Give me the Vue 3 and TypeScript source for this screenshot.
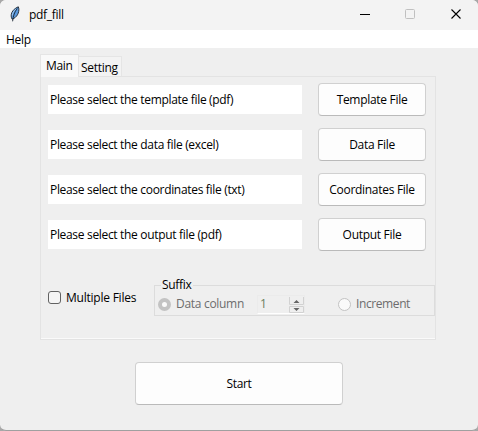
<script setup lang="ts">
import { ref } from 'vue'

interface FileRow {
  hint: string
  action: string
}

const rows: FileRow[] = [
  { hint: 'Please select the template file (pdf)', action: 'Template File' },
  { hint: 'Please select the data file (excel)', action: 'Data File' },
  { hint: 'Please select the coordinates file (txt)', action: 'Coordinates File' },
  { hint: 'Please select the output file (pdf)', action: 'Output File' },
]
const multiple = ref(false)
const column = ref(1)
</script>

<template>
  <div class="window">
    <header class="titlebar">
      <svg class="feather" width="12" height="16" viewBox="0 0 12 16">
        <path d="M3.2 13.2C.8 9.5 2.6 3.6 9.3.8c1.6 3.6-.3 9.400-4.500 11.600z" fill="#5b9be0" stroke="#26303c" stroke-width="1" />
        <path d="M8.300 2.500C5.500 6 4.300 9.500 3.600 15.300" fill="none" stroke="#172230" stroke-width=".9" />
        <path d="M7 2.800C4.700 4.700 3.500 7 3.300 9.500" fill="none" stroke="#b4d4f4" stroke-width=".8" />
      </svg>
      <span class="title">pdf_fill</span>
      <svg class="controls" width="116" height="30" viewBox="0 0 116 30" fill="none">
        <path d="M0 14.500h10" stroke="#000" />
        <rect x="45.500" y="9.500" width="9" height="9" rx="1" stroke="#c0c0c0" />
        <path d="M91.500 9.500l9 9M100.500 9.500l-9 9" stroke="#000" stroke-width="1.100" />
      </svg>
    </header>
    <nav class="menubar"><span class="help">Help</span></nav>
    <main class="body">
      <div class="tabs">
        <div class="tab active"><span>Main</span></div>
        <div class="tab"><span>Setting</span></div>
      </div>
      <section class="panel">
        <div v-for="row in rows" :key="row.action" class="row">
          <div class="entry">{{ row.hint }}</div>
          <button class="btn">{{ row.action }}</button>
        </div>
        <div class="options">
          <div class="check" @click="multiple = !multiple">
            <span class="box" :class="{ on: multiple }"></span>
            <span class="multi">Multiple Files</span>
          </div>
          <fieldset class="group">
            <legend>Suffix</legend>
            <div class="choices">
              <span class="radio on"></span>
              <span class="datacol">Data column</span>
              <div class="spin">
                <span class="value">{{ column }}</span>
                <svg width="15" height="17" viewBox="0 0 15 17">
                  <path d="M.5 0v7.500h14V0M.5 9.500h14v6h-14z" fill="none" stroke="#d2d2d2" />
                  <path d="M4.500 6L7.500 3l3 3zM4.500 11h6l-3 3z" fill="#666" />
                </svg>
              </div>
              <span class="radio"></span>
              <span class="incr">Increment</span>
            </div>
          </fieldset>
        </div>
      </section>
      <button class="btn start">Start</button>
    </main>
  </div>
</template>

<style>
body {
  margin: 0;
  background: #a8a8a8;
}
</style>

<style scoped>
.window {
  box-sizing: border-box;
  width: 478px;
  height: 431px;
  display: flex;
  flex-direction: column;
  overflow: hidden;
  border-bottom: 1px solid #a0a0a0;
  border-radius: 6px;
  background: #efefef;
  color: #000;
  font: 12px/16px 'Open Sans', 'Noto Sans', sans-serif;
  letter-spacing: -0.3px;
  white-space: nowrap;
}
.titlebar {
  height: 30px;
  flex: none;
  display: flex;
  align-items: center;
  padding-left: 9px;
  background: #f3f3f3;
}
.feather {
  margin-top: -3px;
}
.title {
  margin-left: 8px;
}
.controls {
  margin-left: auto;
  margin-right: 2px;
}
.menubar {
  height: 18px;
  flex: none;
  background: #fff;
  padding-left: 6px;
  line-height: 19px;
}
.body {
  display: flex;
  flex-direction: column;
  padding: 6px 42px 0 40px;
}
.tabs {
  display: flex;
  align-items: flex-end;
  height: 22px;
}
.tab {
  box-sizing: border-box;
  width: 43px;
  height: 20px;
  padding: 3px 0 0 2px;
  border: 1px solid #e5e5e5;
  border-width: 1px 1px 0 0;
  background: #f3f3f3;
}
.tab.active {
  width: 39px;
  height: 23px;
  margin-bottom: -1px;
  padding: 3px 0 0 5px;
  border-left-width: 1px;
  background: #f9f9f9;
  z-index: 1;
}
.panel {
  box-sizing: border-box;
  width: 396px;
  height: 264px;
  padding: 6px 0 0 7px;
  border: 1px solid #e3e3e3;
  box-shadow: inset 0 -1px #fafafa;
}
.row {
  display: flex;
  align-items: center;
  height: 33px;
  margin-bottom: 12px;
}
.entry {
  box-sizing: border-box;
  width: 254px;
  height: 29px;
  padding-left: 2px;
  background: #fff;
  letter-spacing: -0.32px;
  line-height: 29px;
}
.btn {
  box-sizing: border-box;
  width: 108px;
  height: 33px;
  margin: 0 0 0 16px;
  padding: 0;
  border: 1px solid #d0d0d0;
  border-bottom-color: #bababa;
  border-radius: 4px;
  background: #fdfdfd;
  color: #000;
  font: inherit;
  letter-spacing: inherit;
}
.options {
  display: flex;
  margin-top: 26px;
}
.check {
  display: flex;
  align-items: center;
  width: 106px;
  height: 29px;
  margin-top: 6px;
}
.box {
  box-sizing: border-box;
  width: 13px;
  height: 13px;
  border: 1px solid #626262;
  border-radius: 3px;
  background: #f5f5f5;
}
.box.on {
  background: #005fb8;
}
.multi {
  margin-left: 5px;
  letter-spacing: -0.23px;
}
.group {
  box-sizing: border-box;
  width: 281px;
  height: 39px;
  min-width: 0;
  margin: 0;
  padding: 0 0 0 3px;
  border: 1px solid #dcdcdc;
}
legend {
  height: 16px;
  margin-left: 3px;
  padding: 0 1px;
}
.choices {
  display: flex;
  align-items: center;
  height: 22px;
  color: #6d6d6d;
}
.radio {
  box-sizing: border-box;
  width: 13px;
  height: 13px;
  flex: none;
  border: 1px solid #c3c3c3;
  border-radius: 50%;
  background: #fafafa;
}
.radio.on {
  border-width: 4px;
}
.datacol {
  width: 81px;
  margin-left: 5px;
}
.spin {
  box-sizing: border-box;
  display: flex;
  justify-content: space-between;
  width: 48px;
  height: 19px;
  margin-right: 33px;
  padding: 1px 0 0 2px;
  border: 1px solid #ebebeb;
  border-bottom-color: #fff;
}
.value {
  color: #6c8060;
  line-height: 14px;
}
.incr {
  margin-left: 5px;
  letter-spacing: -0.4px;
}
.start {
  width: 208px;
  height: 43px;
  margin: 22px 0 0 95px;
}
</style>
